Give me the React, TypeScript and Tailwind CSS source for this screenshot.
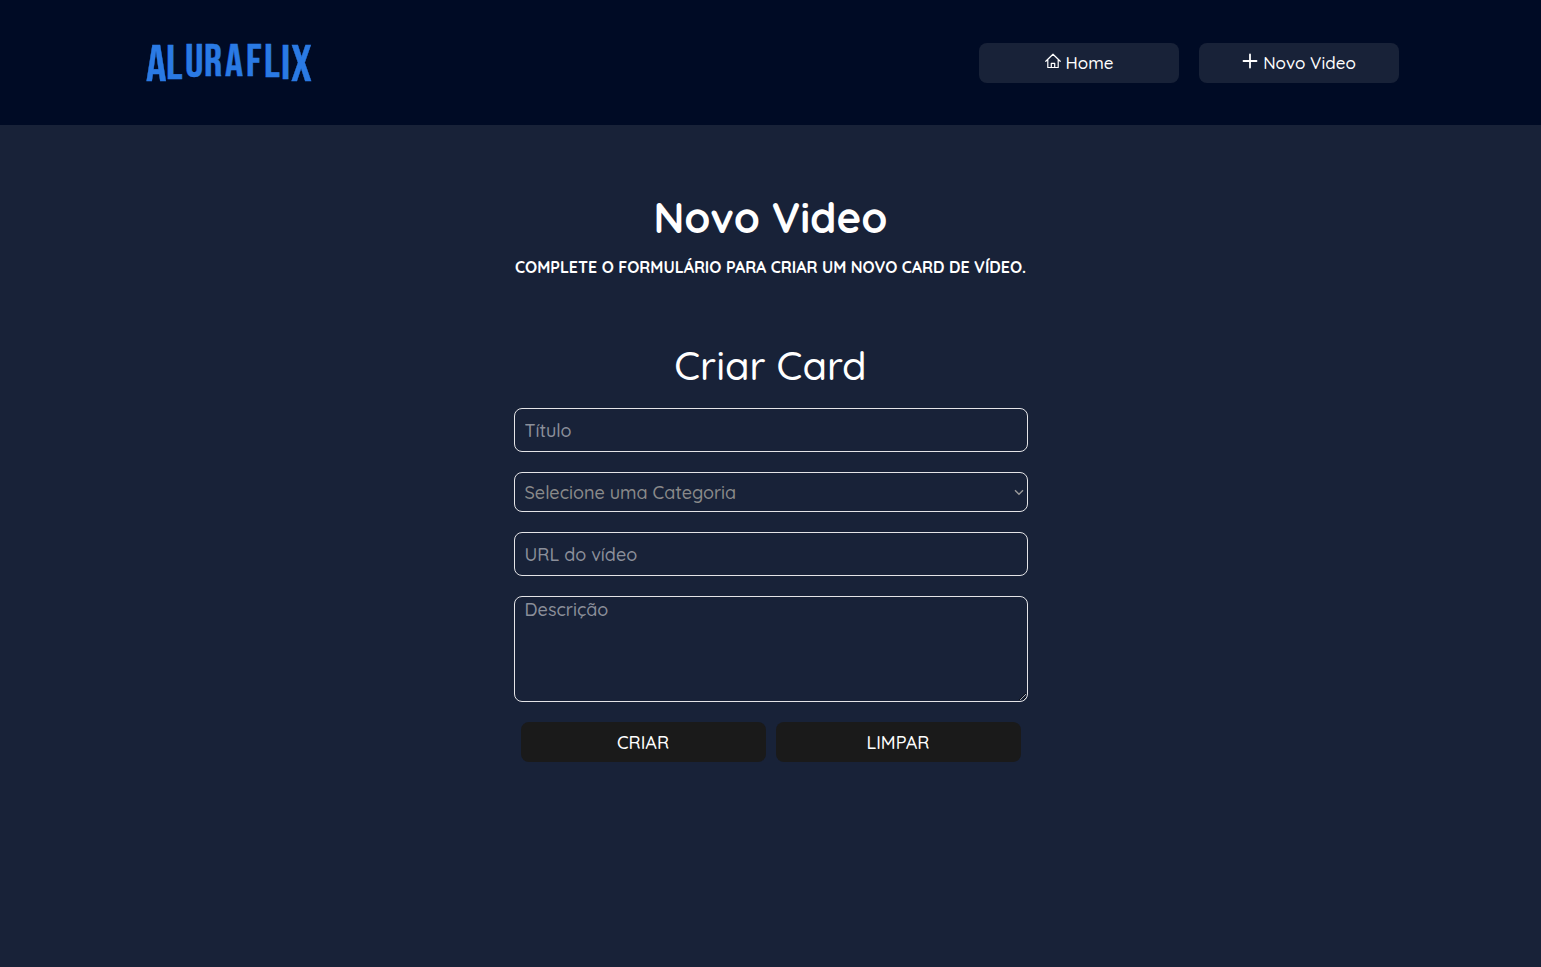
import type { ReactNode } from "react";

const logoLetters = [
  { char: "A", size: 51, x: 4, y: 41 },
  { char: "L", size: 48, x: 24, y: 39 },
  { char: "U", size: 46, x: 43, y: 37 },
  { char: "R", size: 45, x: 62, y: 36 },
  { char: "A", size: 45, x: 83, y: 36 },
  { char: "F", size: 45, x: 104, y: 36 },
  { char: "L", size: 46, x: 122, y: 37 },
  { char: "I", size: 48, x: 139, y: 39 },
  { char: "X", size: 51, x: 149, y: 41 },
];

function Logo() {
  return (
    <a href="#" aria-label="Aluraflix" className="block">
      <svg viewBox="0 0 176 46" className="h-[46px] w-44 overflow-visible" aria-hidden="true">
        <text
          fill="#2a7ae4"
          stroke="#2a7ae4"
          strokeWidth="0.4"
          fontFamily="'Bebas Neue', 'Open Sans Condensed', 'Roboto Condensed', sans-serif"
          fontWeight="400"
        >
          {logoLetters.map((l) => (
            <tspan key={l.x} x={l.x} y={l.y} fontSize={l.size}>
              {l.char}
            </tspan>
          ))}
        </text>
      </svg>
    </a>
  );
}

function HomeIcon() {
  return (
    <svg viewBox="0 0 16 16" className="size-4" fill="none" stroke="currentColor" aria-hidden="true">
      <path d="M.8 8.3 8 1.2l7.2 7.1M2.8 6.8v7.7h10.4V6.8M6.3 14.5v-4.2h3.4v4.2" strokeWidth="1.2" strokeLinejoin="round" strokeLinecap="round" />
    </svg>
  );
}

function PlusIcon() {
  return (
    <svg viewBox="0 0 16 16" className="size-4" fill="none" stroke="currentColor" aria-hidden="true">
      <path d="M8 1.5v13M1.5 8h13" strokeWidth="1.8" strokeLinecap="round" />
    </svg>
  );
}

function NavButton({ icon, children }: { icon: ReactNode; children: ReactNode }) {
  return (
    <button type="button" className="flex h-10 w-[200px] items-center justify-center gap-[5px] rounded-lg bg-[#182238] text-[17px]">
      <span className="pb-1">{icon}</span>
      {children}
    </button>
  );
}

const field = "block w-full rounded-lg border border-[#e4e4e7] bg-transparent text-lg";

export default function App() {
  return (
    <div className="min-h-screen bg-[#182238] font-['Quicksand','Lato',sans-serif] font-medium text-white">
      <header className="flex h-[125px] items-center justify-between bg-[#000b25] px-[142px]">
        <Logo />
        <nav className="flex gap-5">
          <NavButton icon={<HomeIcon />}>Home</NavButton>
          <NavButton icon={<PlusIcon />}>Novo Video</NavButton>
        </nav>
      </header>
      <main className="flex flex-col items-center pt-16">
        <h1 className="text-[42px] leading-[58px] font-bold">Novo Video</h1>
        <p className="mt-2.5 text-base leading-5 font-bold">COMPLETE O FORMULÁRIO PARA CRIAR UM NOVO CARD DE VÍDEO.</p>
        <form className="mt-16 flex w-full max-w-[514px] flex-col gap-5">
          <h2 className="-mb-px text-center text-[40px] leading-[48px]">Criar Card</h2>
          <input aria-label="Título" placeholder="Título" className={`${field} h-11 px-2.5 placeholder:text-[#8b8f9a]`} />
          <div className="relative">
            <select aria-label="Categoria" defaultValue="" className={`${field} h-10 appearance-none px-2.5 pt-0.5 text-[#8a8a8a]`}>
              <option value="">Selecione uma Categoria</option>
            </select>
            <svg viewBox="0 0 10 10" className="pointer-events-none absolute top-[15px] right-1 size-2.5 text-[#9a9a9a]" fill="none" stroke="currentColor" aria-hidden="true">
              <path d="M1 3.2 5 7.2l4-4" strokeWidth="1.4" />
            </svg>
          </div>
          <input aria-label="URL do vídeo" placeholder="URL do vídeo" className={`${field} h-11 px-2.5 placeholder:text-[#8b8f9a]`} />
          <textarea aria-label="Descrição" placeholder="Descrição" className={`${field} h-[106px] px-2.5 leading-[26px] placeholder:text-[#8b8f9a]`} />
          <div className="flex gap-2.5 px-[7px]">
            <button type="submit" className="h-10 flex-1 rounded-lg bg-[#1a1a1a] pt-0.5 text-lg">CRIAR</button>
            <button type="reset" className="h-10 flex-1 rounded-lg bg-[#1a1a1a] pt-0.5 text-lg">LIMPAR</button>
          </div>
        </form>
      </main>
    </div>
  );
}
